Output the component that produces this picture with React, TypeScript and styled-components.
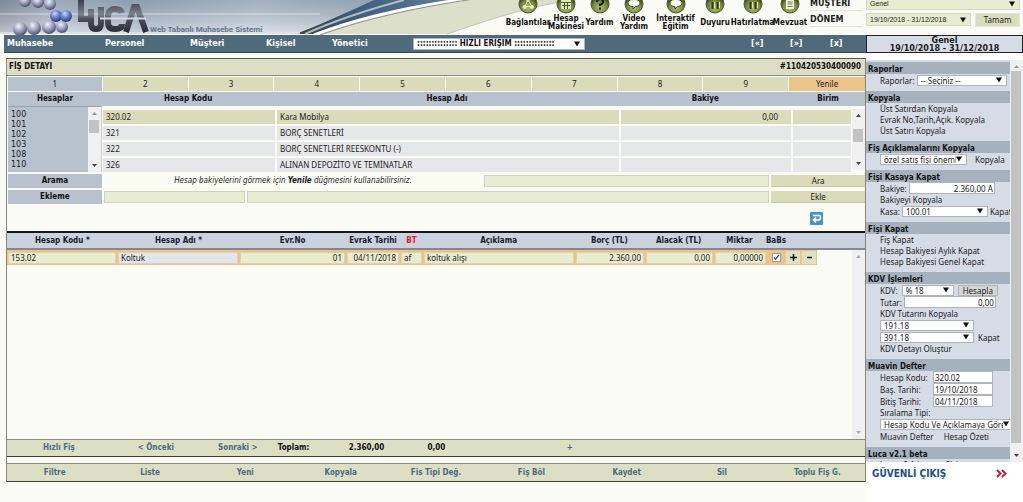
import React from "react";
import styled, { createGlobalStyle, css } from "styled-components";

const narrow = `"DejaVu Sans Condensed", "DejaVu Sans", sans-serif`;
const wide = `"DejaVu Sans", sans-serif`;
const human = `"Noto Sans", sans-serif`;
const plain = `"Liberation Sans", sans-serif`;

const c = {
  page: "#fbfbf5",
  nav: "#4f6b7b",
  olive: "#dcdfc4",
  tab: "#d9dbb9",
  slate: "#b8c2ce",
  slateLight: "#cad2de",
  field: "#e9edd0",
  fieldCool: "#e2e5ea",
  orange: "#ecc388",
  side: "#d5dce6",
  sideHead: "#a6b1be",
  link: "#4b6b85",
};

const Global = createGlobalStyle`
  *, *::before, *::after { box-sizing: border-box; }
  html, body { margin: 0; padding: 0; overflow: hidden; background: ${c.page}; }
  body { font: 8px/12px ${human}; color: #1c1c1c; }
  button, input, select { font: inherit; color: inherit; margin: 0; border-radius: 0; }
  button { cursor: pointer; padding: 0; border: 0; background: none; }
  a { color: inherit; text-decoration: none; }
  table { border-spacing: 0; }
  th, td { padding: 0; }
`;

const Page = styled.div`
  display: flex;
  flex-direction: column;
  height: 100vh;
  min-width: 960px;
`;

/* ---------- top banner ---------- */

const Header = styled.header`
  position: relative;
  flex: none;
  height: 35px;
  overflow: hidden;
  display: flex;
  justify-content: flex-end;
  align-items: flex-end;
`;

const BannerArt = styled.svg`
  position: absolute;
  left: 0;
  top: 0;
`;

const Tools = styled.nav`
  position: relative;
  display: grid;
  grid-template-columns: 42px 34px 33px 36px 47px 32px 43px 32px;
  margin-right: 4px;
`;

const Tool = styled.a`
  display: flex;
  flex-direction: column;
  align-items: center;
  height: 41px;
  font: bold 8px/8px ${narrow};
  white-space: nowrap;
  color: #111;
`;

const ToolLabel = styled.span`
  flex: 1;
  display: flex;
  align-items: center;
  text-align: center;
  white-space: pre;
  padding-bottom: 4px;
`;

const PeriodForm = styled.form`
  position: relative;
  display: grid;
  grid-template-columns: 52px 105px 45px;
  column-gap: 4px;
  row-gap: 2px;
  padding: 0 3px 8px 0;
  select { font: 7px/10px ${plain}; }
`;

const PeriodLabel = styled.label`
  font: bold 8px/14px ${wide};
  height: 14px;
  border-bottom: 1px solid #e2e2da;
  color: #222;
`;

const PillButton = styled.button`
  height: 14px;
  background: #d9dcc0;
  border: 1px solid #e6e8d6;
  text-align: center;
`;

/* ---------- shared form parts ---------- */

const SelectWrap = styled.span<{ $w?: string; $bg?: string; $h?: number; $span?: boolean }>`
  position: relative;
  display: inline-flex;
  width: ${(p) => p.$w ?? "100%"};
  height: ${(p) => p.$h ?? 11}px;
  flex: none;
  background: ${(p) => p.$bg ?? "#fff"};
  border: 1px solid ${(p) => (p.$bg ? "#d5d8c0" : "#aeb4bc")};
  ${(p) => p.$span && css`grid-column: span 2;`}
  select {
    appearance: none;
    border: 0;
    outline: 0;
    background: transparent;
    width: 100%;
    height: 100%;
    padding: 0 10px 0 3px;
    line-height: 10px;
    overflow: hidden;
    white-space: nowrap;
  }
  svg {
    position: absolute;
    right: 4px;
    top: calc(50% - 3px);
    pointer-events: none;
  }
`;

type PickProps = {
  label?: string;
  id?: string;
  value: string;
  w?: string;
  bg?: string;
  h?: number;
  span?: boolean;
};

function Pick({ label, id, value, w, bg, h, span }: PickProps) {
  return (
    <SelectWrap $w={w} $bg={bg} $h={h} $span={span}>
      <select id={id} aria-label={label}>
        <option>{value}</option>
      </select>
      <svg width="6" height="6" viewBox="0 0 6 6">
        <path d="M0 .5h6L3 5.500z" fill="#111" />
      </svg>
    </SelectWrap>
  );
}

const Bar = styled.div`
  position: relative;
  width: 13px;
  flex: none;
  background: #f0f0f0;
  display: flex;
  flex-direction: column;
  align-items: center;
  justify-content: space-between;
  padding: 4px 0;
`;

const Thumb = styled.div<{ $top: number; $height: string }>`
  position: absolute;
  top: ${(p) => p.$top}px;
  left: 1px;
  right: 2px;
  height: ${(p) => p.$height};
  background: #c2c2c2;
`;

function ScrollBar({ top, height, up = "#999", down = "#444" }: { top?: number; height?: string; up?: string; down?: string }) {
  return (
    <Bar aria-hidden="true">
      <svg width="5" height="5" viewBox="0 0 5 5">
        <path d="M0 4h5L2.500 1z" fill={up} />
      </svg>
      {top !== undefined && <Thumb $top={top} $height={height ?? "20px"} />}
      <svg width="5" height="5" viewBox="0 0 5 5">
        <path d="M0 1h5L2.500 4z" fill={down} />
      </svg>
    </Bar>
  );
}

/* ---------- navigation ---------- */

const Body = styled.div`
  flex: 1;
  min-height: 0;
  display: grid;
  grid-template-columns: minmax(0, 1fr) 157px;
`;

const Main = styled.main`
  display: flex;
  flex-direction: column;
  min-height: 0;
  padding-bottom: 20px;
`;

const NavBar = styled.nav`
  flex: none;
  height: 18px;
  margin-left: 4px;
  padding: 0 21px 0 3px;
  background: ${c.nav};
  border-bottom: 1px solid #35495a;
  color: #fff;
  font: bold 8px/18px ${wide};
  display: grid;
  grid-template-columns: 98px 85px 76px 66px 81px 172px 1fr 39px 40px 15px;
  align-items: center;
`;

const QuickPick = styled.div`
  display: flex;
  color: #111;
  font-family: ${narrow};
`;

/* ---------- receipt panel ---------- */

const Panel = styled.section`
  flex: 1;
  min-height: 0;
  margin: 5px 0 0 6px;
  border: 1px solid #85887a;
  border-top-color: #55584a;
  border-bottom: 0;
  display: flex;
  flex-direction: column;
`;

const Title = styled.header`
  flex: none;
  height: 17px;
  padding: 0 4px 0 2px;
  display: flex;
  justify-content: space-between;
  background: ${c.olive};
  border-bottom: 1px solid #8b8d83;
  font: bold 8px/16px ${narrow};
  color: #111;
  h1 { margin: 0; font: inherit; }
`;

const Tabs = styled.div`
  flex: none;
  display: grid;
  grid-template-columns: 94fr repeat(8, 85fr) 76fr;
  gap: 1px;
  padding: 1px 0 1px 1px;
`;

const Tab = styled.button<{ $tone: string }>`
  height: 14px;
  background: ${(p) => p.$tone};
`;

const Lookup = styled.div`
  flex: none;
  display: grid;
  grid-template-columns: 94px minmax(0, 1fr);
  padding-left: 1px;
`;

const headCell = css`
  font: bold 8px/14px ${narrow};
  text-align: center;
  height: 14px;
  color: #111;
`;

const GroupHead = styled.label`
  ${headCell}
  display: block;
  background: ${c.slate};
`;

const GroupList = styled.div`
  display: flex;
  height: 66px;
  border-top: 1px solid #99a3ad;
  border-right: 1px solid #c9ccd0;
  background: ${c.slate};
  select {
    appearance: none;
    flex: 1;
    border: 0;
    outline: 0;
    overflow: hidden;
    background: transparent;
    padding: 3px 0 0;
    font: 8px/10px ${wide};
  }
  option { padding: 0 0 0 3px; min-height: 0; height: 10px; line-height: 10px; }
`;

const AccountsBox = styled.div`
  position: relative;
  height: 80px;
  overflow: hidden;
`;

const AccountsTable = styled.table`
  display: block;
  thead, tbody { display: block; }
  thead { background: ${c.slate}; margin-bottom: 4px; }
`;

const AccountsHead = styled.tr`
  display: grid;
  grid-template-columns: 172fr 345fr 171fr 74fr;
  th { ${headCell} }
`;

const AccountsRow = styled.tr<{ $on?: boolean }>`
  display: grid;
  grid-template-columns: 172fr 342fr 170fr 58fr;
  column-gap: 2px;
  margin: 0 14px 2px 1px;
  td {
    height: 14px;
    line-height: 14px;
    padding-left: 3px;
    background: ${(p) => (p.$on ? c.tab : "#e6e7e9")};
  }
  td:nth-child(3) { text-align: right; padding-right: 13px; }
`;

const AccountsBar = styled.div`
  position: absolute;
  right: 0;
  top: 17px;
  bottom: 2px;
  display: flex;
`;

const Search = styled.form`
  flex: none;
  display: grid;
  grid-template-columns: 94fr 380fr 286fr 94fr;
  column-gap: 2px;
  height: 14px;
  margin: 2px 0 0 1px;
  align-items: center;
`;

const Adding = styled(Search)`
  grid-template-columns: 94fr 142fr 524fr 94fr;
`;

const RowLabel = styled.label`
  ${headCell}
  background: ${c.slate};
`;

const Hint = styled.p`
  margin: 0;
  text-align: center;
  font: italic 8px/14px ${narrow};
`;

const Field = styled.input<{ $bg?: string }>`
  width: 100%;
  min-width: 0;
  height: 12px;
  padding: 0 3px;
  border: 1px solid #cfd2c0;
  background: ${(p) => p.$bg ?? c.field};
  outline: 0;
`;

const OliveButton = styled.button`
  height: 12px;
  line-height: 12px;
  background: ${c.tab};
  border-bottom: 1px solid #c5c8a8;
`;

const BackRow = styled.div`
  flex: none;
  height: 27px;
  padding: 8px 42px 0 0;
  display: flex;
  justify-content: flex-end;
  button { height: 13px; }
`;

/* ---------- entry lines ---------- */

const lineColumns = "111fr 122fr 107fr 54fr 23fr 152fr 70fr 69fr 53fr 18fr 31px 48px";

const Lines = styled.div`
  position: relative;
  flex: 1;
  min-height: 0;
  display: flex;
  flex-direction: column;
  border-top: 2px solid #16181c;
`;

const LinesTable = styled.table`
  display: block;
  thead, tbody { display: block; }
`;

const LinesHead = styled.tr`
  display: grid;
  grid-template-columns: ${lineColumns};
  height: 17px;
  background: ${c.slateLight};
  border-bottom: 2px solid #85878a;
  th { font: bold 8px/15px ${narrow}; white-space: nowrap; color: #16202c; }
  th:nth-child(4), th:nth-child(10) { display: flex; justify-content: center; }
  th:nth-child(5) { color: #e02030; }
`;

const LinesRow = styled.tr`
  display: grid;
  grid-template-columns: ${lineColumns};
  height: 15px;
  background: linear-gradient(${c.orange}, ${c.orange}) no-repeat 0 0 / calc(100% - 48px) 100%;
  td { display: flex; align-items: center; padding-right: 2px; }
  td:nth-child(1) { padding-left: 1px; }
  td:nth-child(10) { justify-content: center; }
  td:nth-child(11) { gap: 2px; padding: 0; }
`;

const LineField = styled(Field)<{ $end?: boolean }>`
  padding: 0 2px;
  border-color: #d9d3b0;
  text-align: ${(p) => (p.$end ? "right" : "left")};
`;

const Check = styled.input`
  appearance: none;
  width: 9px;
  height: 9px;
  border: 1px solid #9a9a9a;
  background: #fff url("data:image/svg+xml,%3Csvg xmlns='http://www.w3.org/2000/svg' viewBox='0 0 8 8'%3E%3Cpath d='M1 4l2 2 4-5' fill='none' stroke='%23234a80' stroke-width='1.500'/%3E%3C/svg%3E") center / 7px 7px;
`;

const StepButton = styled.button`
  width: 14px;
  height: 13px;
  background: #dfe1c6;
  display: flex;
  align-items: center;
  justify-content: center;
`;

const LinesBar = styled.div`
  position: absolute;
  right: 0;
  top: 17px;
  bottom: 0;
  display: flex;
`;

const footBar = css`
  flex: none;
  display: grid;
  align-items: center;
  background: ${c.olive};
  border-top: 1px solid #8b8d83;
  border-bottom: 1px solid #3c3e38;
  font-weight: bold;
  text-align: center;
  color: ${c.link};
`;

const Totals = styled.div`
  ${footBar}
  height: 18px;
  grid-template-columns: 104fr 90fr 74fr 38fr 108fr 32fr 235fr 178fr;
  white-space: nowrap;
`;

const Sum = styled.output`
  color: #111;
  font: bold 8px/16px ${narrow};
  text-align: center;
`;

const Actions = styled.div`
  ${footBar}
  height: 19px;
  margin: 6px 0 0;
  grid-template-columns: repeat(9, 1fr);
`;

const TextButton = styled.button`
  font: bold 8px/14px ${narrow};
`;

/* ---------- side column ---------- */

const Side = styled.aside`
  display: flex;
  flex-direction: column;
  min-height: 0;
  background: #fff;
`;

const Company = styled.div`
  flex: none;
  height: 18px;
  padding-top: 1px;
  border: 1px solid #222;
  background: ${c.side};
  text-align: center;
  font: bold 8px/8px ${wide};
`;

const SideScroll = styled.div`
  flex: 1;
  min-height: 0;
  display: flex;
  margin-top: 7px;
`;

const SideBody = styled.div`
  flex: 1;
  min-width: 0;
  overflow: hidden;
  background: ${c.side};
  padding-top: 2px;
`;

const Group = styled.section`
  padding-bottom: 5px;
  h2 {
    margin: 0;
    padding: 4px 0 0 2px;
    height: 12px;
    background: ${c.sideHead};
    font: bold 8px/8px ${narrow};
    color: #111;
    white-space: nowrap;
  }
`;

const Item = styled.a`
  display: block;
  height: 11px;
  line-height: 11px;
  padding-left: 14px;
  white-space: nowrap;
`;

const FormRow = styled.div<{ $gap?: number }>`
  display: flex;
  align-items: center;
  height: 12px;
  gap: ${(p) => p.$gap ?? 2}px;
  padding-left: 14px;
  line-height: 11px;
  white-space: nowrap;
`;

const FixedLabel = styled.label`
  width: 51px;
  flex: none;
`;

const SideField = styled.input<{ $w: number; $end?: boolean }>`
  width: ${(p) => p.$w}px;
  flex: none;
  height: 12px;
  padding: 0 1px;
  border: 1px solid #aeb4bc;
  background: #fff;
  text-align: ${(p) => (p.$end ? "right" : "left")};
`;

const SmallButton = styled.button`
  height: 11px;
  padding: 0 4px;
  line-height: 9px;
  background: #d6d6d6;
  border: 1px solid #b4b4b4;
`;

const Exit = styled.a`
  flex: none;
  height: 40px;
  padding: 6px 16px 0 6px;
  display: flex;
  justify-content: space-between;
  font: bold 10px/12px ${narrow};
  color: #1b4f8a;
`;

/* ---------- drawings ---------- */

function Banner() {
  const pearls = [
    [25, 1, 6], [38, 2, 6], [50, 4, 6],
    [20, 29, 7], [34, 28, 7], [49, 27, 7], [62, 27, 6],
  ];
  return (
    <BannerArt width="580" height="35" viewBox="0 0 580 35" aria-hidden="true">
      <defs>
        <linearGradient id="sky" x1="0" x2="1" y1="0" y2="0">
          <stop offset="0" stopColor="#8b93a0" />
          <stop offset=".12" stopColor="#b9c1cc" />
          <stop offset=".3" stopColor="#a2b1c2" />
          <stop offset=".55" stopColor="#c2ccd7" />
          <stop offset=".8" stopColor="#a9b7c4" />
          <stop offset="1" stopColor="#7f95a8" />
        </linearGradient>
        <linearGradient id="haze" x1="0" x2="0" y1="0" y2="1">
          <stop offset="0" stopColor="#5b7085" stopOpacity=".3" />
          <stop offset="1" stopColor="#fff" stopOpacity=".45" />
        </linearGradient>
        <linearGradient id="edge" x1="0" x2="1" y1="0" y2="0">
          <stop offset="0" stopColor="#3c3f3f" />
          <stop offset=".4" stopColor="#3d5f7c" />
          <stop offset="1" stopColor="#5d7d98" />
        </linearGradient>
        <radialGradient id="pearl" cx=".4" cy=".3" r=".7">
          <stop offset="0" stopColor="#f1f2fa" />
          <stop offset=".5" stopColor="#a3a7c4" />
          <stop offset="1" stopColor="#4c5070" />
        </radialGradient>
        <radialGradient id="blue" cx=".4" cy=".3" r=".7">
          <stop offset="0" stopColor="#cdd9fb" />
          <stop offset=".5" stopColor="#6680c8" />
          <stop offset="1" stopColor="#2a3a78" />
        </radialGradient>
        <linearGradient id="metal" gradientUnits="userSpaceOnUse" x1="0" x2="0" y1="0" y2="32">
          <stop offset="0" stopColor="#3a3f49" />
          <stop offset=".45" stopColor="#7d828d" />
          <stop offset=".6" stopColor="#4a4f5a" />
          <stop offset="1" stopColor="#2a2d36" />
        </linearGradient>
      </defs>
      <path d="M0 0H572C530 6 488 20 447 34H0z" fill="#dcdfca" />
      <path d="M0 0H466C400 8 352 22 318 34H0z" fill="url(#sky)" />
      <path d="M0 0H466C400 8 352 22 318 34H0z" fill="url(#haze)" />
      <path d="M296 34C322 24 352 10 374 0H448C396 8 350 22 314 34z" fill="url(#edge)" />
      <path d="M305 34C336 20 374 8 404 0" fill="none" stroke="#b4bcc2" strokeWidth="2" />
      <path d="M314 35C350 21 400 8 466 -1" fill="none" stroke="#fff" strokeWidth="3" />
      <path d="M320 35C356 22 406 9 474 -1" fill="none" stroke="#8c9088" strokeWidth="1" />
      <path d="M447 34C488 20 530 6 572 0" fill="none" stroke="#c3c7b4" strokeWidth="1" />
      <path d="M0 14H320" stroke="#e9edf2" strokeWidth="1" opacity=".7" />
      <path d="M0 33H300" stroke="#dfe4ea" strokeWidth="2" opacity=".8" />
      {pearls.map(([x, y, r]) => (
        <circle key={`${x}-${y}`} cx={x} cy={y} r={r} fill="url(#pearl)" />
      ))}
      <circle cx="56" cy="16" r="6" fill="url(#blue)" />
      <circle cx="66" cy="16" r="6" fill="url(#blue)" />
      <g stroke="url(#metal)" fill="none" strokeWidth="6">
        <path d="M81 -2V19H90" />
        <path d="M91 9V23Q91 29 96 29T101 23V7" />
        <path d="M122 13Q121 9 115 9T108 15V23Q108 29 115 29T122 24" />
        <path d="M126 32L134 7H137L146 32" />
      </g>
      <path d="M100 18.500H146" stroke="#d5d9df" strokeWidth="2" />
      <text x="150" y="32" fill="#61758a" fontFamily="Roboto, sans-serif" fontWeight="bold" fontSize="8">
        Web Tabanlı Muhasebe Sistemi
      </text>
    </BannerArt>
  );
}

const glyphs: Record<string, React.ReactNode> = {
  links: (
    <g fill="#e6ebc6" stroke="#e6ebc6">
      <path d="M10 6L7 12.500M7 12.500H14M10 6L14 12.500" fill="none" strokeWidth="1" />
      <circle cx="10" cy="5.500" r="1.500" />
      <circle cx="6.500" cy="13" r="1.500" />
      <circle cx="14" cy="13" r="1.500" />
    </g>
  ),
  calc: (
    <g>
      <rect x="5" y="5" width="10" height="10" fill="#dfe6b4" />
      <path d="M5 8.500H15M6 11.500H14M8.500 8V15M11.500 8V15" stroke="#4c5c20" />
    </g>
  ),
  help: (
    <g fill="none" stroke="#15180a" strokeWidth="2">
      <path d="M7 8Q7 5 10 5T13 8Q13 10 10 10.500V12" />
      <path d="M10 13.500V15.500" />
    </g>
  ),
  chat: (
    <path d="M10 5.500C14 5.500 16 7 16 9S14 12.500 11.500 12.500L9 15V12.500C6 12.500 4 11.500 4 9S6 5.500 10 5.500z" fill="#fff" stroke="#39451a" />
  ),
  info: (
    <g fill="none" stroke="#2c3810" strokeWidth="2">
      <path d="M7.500 8V15M12.500 8V15M7.500 4V6M12.500 4V6" />
      <path d="M9.500 8V14M14.500 8V14" stroke="#dfe6b4" strokeWidth="1" />
    </g>
  ),
  page: (
    <g>
      <path d="M6 4H12L14 6V15H6z" fill="#f1f4e2" />
      <path d="M7.500 8H12.500M7.500 10H12.500M7.500 12.500H12.500" stroke="#6d7b45" />
    </g>
  ),
};

function Orb({ kind }: { kind: string }) {
  return (
    <svg width="20" height="20" viewBox="0 0 20 20" aria-hidden="true">
      <defs>
        <radialGradient id={`orb-${kind}`} cx=".5" cy=".7" r=".6">
          <stop offset="0" stopColor="#b3c26c" />
          <stop offset=".65" stopColor="#75883a" />
          <stop offset="1" stopColor="#37441a" />
        </radialGradient>
      </defs>
      <circle cx="10" cy="10" r="9" fill={`url(#orb-${kind})`} stroke="#4d5347" />
      {glyphs[kind]}
    </svg>
  );
}

/* ---------- data ---------- */

const tools = [
  ["links", "Bağlantılar"],
  ["calc", "Hesap\nMakinesi"],
  ["help", "Yardım"],
  ["chat", "Video\nYardım"],
  ["chat", "İnteraktif\nEğitim"],
  ["info", "Duyuru"],
  ["info", "Hatırlatma"],
  ["page", "Mevzuat"],
];

const accounts = [
  ["320.02", "Kara Mobilya", "0,00"],
  ["321", "BORÇ SENETLERİ", ""],
  ["322", "BORÇ SENETLERİ REESKONTU (-)", ""],
  ["326", "ALINAN DEPOZİTO VE TEMİNATLAR", ""],
];

const lineHeads = ["Hesap Kodu *", "Hesap Adı *", "Evr.No", "Evrak Tarihi", "BT", "Açıklama", "Borç (TL)", "Alacak (TL)", "Miktar", "BaBs", "", ""];

const lineFields: { name: string; value: string; end?: boolean; bg?: string }[] = [
  { name: "Hesap Kodu", value: "153.02" },
  { name: "Hesap Adı", value: "Koltuk", bg: c.fieldCool },
  { name: "Evr.No", value: "01", end: true },
  { name: "Evrak Tarihi", value: "04/11/2018", end: true },
  { name: "BT", value: "af" },
  { name: "Açıklama", value: "koltuk alışı" },
  { name: "Borç (TL)", value: "2.360,00", end: true },
  { name: "Alacak (TL)", value: "0,00", end: true },
  { name: "Miktar", value: "0,00000", end: true },
];

const actions = ["Filtre", "Liste", "Yeni", "Kopyala", "Fis Tipi Değ.", "Fiş Böl", "Kaydet", "Sil", "Toplu Fiş G."];

/* ---------- page ---------- */

function SideColumn() {
  return (
    <Side>
      <Company>
        Genel
        <br />
        19/10/2018 - 31/12/2018
      </Company>
      <SideScroll>
        <SideBody>
          <Group>
            <h2>Raporlar</h2>
            <FormRow>
              <label htmlFor="reports">Raporlar:</label>
              <Pick id="reports" value="-- Seçiniz --" w="90px" />
            </FormRow>
          </Group>
          <Group>
            <h2>Kopyala</h2>
            <Item href="#">Üst Satırdan Kopyala</Item>
            <Item href="#">Evrak No,Tarih,Açık. Kopyala</Item>
            <Item href="#">Üst Satırı Kopyala</Item>
          </Group>
          <Group>
            <h2>Fiş Açıklamalarını Kopyala</h2>
            <FormRow $gap={8}>
              <Pick label="Fiş açıklaması" value="özel satış fişi önemli" w="87px" />
              <a href="#">Kopyala</a>
            </FormRow>
          </Group>
          <Group>
            <h2>Fişi Kasaya Kapat</h2>
            <FormRow>
              <label htmlFor="balance">Bakiye:</label>
              <SideField id="balance" defaultValue="2.360,00 A" $w={86} $end />
            </FormRow>
            <Item href="#">Bakiyeyi Kopyala</Item>
            <FormRow>
              <label htmlFor="cash">Kasa:</label>
              <Pick id="cash" value="100.01" w="86px" />
              <a href="#">Kapat</a>
            </FormRow>
          </Group>
          <Group>
            <h2>Fişi Kapat</h2>
            <Item href="#">Fiş Kapat</Item>
            <Item href="#">Hesap Bakiyesi Aylık Kapat</Item>
            <Item href="#">Hesap Bakiyesi Genel Kapat</Item>
          </Group>
          <Group>
            <h2>KDV İşlemleri</h2>
            <FormRow $gap={4}>
              <label htmlFor="vat">KDV:</label>
              <Pick id="vat" value="% 18" w="52px" />
              <SmallButton type="button">Hesapla</SmallButton>
            </FormRow>
            <FormRow>
              <label htmlFor="amount">Tutar:</label>
              <SideField id="amount" defaultValue="0,00" $w={92} $end />
            </FormRow>
            <Item href="#">KDV Tutarını Kopyala</Item>
            <FormRow>
              <Pick label="İndirilecek KDV" value="191.18" w="94px" />
            </FormRow>
            <FormRow $gap={4}>
              <Pick label="Hesaplanan KDV" value="391.18" w="94px" />
              <a href="#">Kapat</a>
            </FormRow>
            <Item href="#">KDV Detayı Oluştur</Item>
          </Group>
          <Group>
            <h2>Muavin Defter</h2>
            <FormRow>
              <FixedLabel htmlFor="code">Hesap Kodu:</FixedLabel>
              <SideField id="code" defaultValue="320.02" $w={60} />
            </FormRow>
            <FormRow>
              <FixedLabel htmlFor="from">Baş. Tarihi:</FixedLabel>
              <SideField id="from" defaultValue="19/10/2018" $w={60} />
            </FormRow>
            <FormRow>
              <FixedLabel htmlFor="to">Bitiş Tarihi:</FixedLabel>
              <SideField id="to" defaultValue="04/11/2018" $w={60} />
            </FormRow>
            <Item as="label" htmlFor="order">Sıralama Tipi:</Item>
            <FormRow>
              <Pick id="order" value="Hesap Kodu Ve Açıklamaya Göre" w="134px" />
            </FormRow>
            <FormRow $gap={10}>
              <a href="#">Muavin Defter</a>
              <a href="#">Hesap Özeti</a>
            </FormRow>
          </Group>
          <Group>
            <h2>Luca v2.1 beta</h2>
            <Item href="#">Luca v2.1 betaya Giriş</Item>
          </Group>
        </SideBody>
        <ScrollBar top={11} height="calc(100% - 30px)" />
      </SideScroll>
      <Exit href="#">
        GÜVENLİ ÇIKIŞ
        <svg width="11" height="11" viewBox="0 0 11 11" aria-hidden="true">
          <path d="M1 2l3.500 3.500L1 9M6 2l3.500 3.500L6 9" fill="none" stroke="#c8202c" strokeWidth="2" />
        </svg>
      </Exit>
    </Side>
  );
}

export default function App() {
  return (
    <Page>
      <Global />
      <Header>
        <Banner />
        <Tools>
          {tools.map(([kind, label]) => (
            <Tool href="#" key={label}>
              <Orb kind={kind} />
              <ToolLabel>{label}</ToolLabel>
            </Tool>
          ))}
        </Tools>
        <PeriodForm>
          <PeriodLabel htmlFor="client">MÜŞTERİ</PeriodLabel>
          <Pick id="client" value="Genel" bg="#e9edd0" h={13} span />
          <PeriodLabel htmlFor="period">DÖNEM</PeriodLabel>
          <Pick id="period" value="19/10/2018 - 31/12/2018" bg="#e9edd0" h={13} />
          <PillButton type="button">Tamam</PillButton>
        </PeriodForm>
      </Header>

      <Body>
        <Main>
          <NavBar>
            <a href="#">Muhasebe</a>
            <a href="#">Personel</a>
            <a href="#">Müşteri</a>
            <a href="#">Kişisel</a>
            <a href="#">Yönetici</a>
            <QuickPick>
              <Pick label="Hızlı erişim" value=":::::::::::::: HIZLI ERİŞİM ::::::::::::::" h={12} />
            </QuickPick>
            <span />
            <a href="#">[«]</a>
            <a href="#">[»]</a>
            <a href="#">[x]</a>
          </NavBar>

          <Panel>
            <Title>
              <h1>FİŞ DETAYI</h1>
              <span>#110420530400090</span>
            </Title>
            <Tabs>
              {["1", "2", "3", "4", "5", "6", "7", "8", "9", "Yenile"].map((t, i) => (
                <Tab key={t} type="button" $tone={i === 0 ? c.slate : i === 9 ? c.orange : c.tab}>
                  {t}
                </Tab>
              ))}
            </Tabs>

            <Lookup>
              <div>
                <GroupHead htmlFor="groups">Hesaplar</GroupHead>
                <GroupList>
                  <select id="groups" size={6}>
                    {["100", "101", "102", "103", "108", "110"].map((g) => (
                      <option key={g}>{g}</option>
                    ))}
                  </select>
                  <ScrollBar top={13} height="13px" />
                </GroupList>
              </div>
              <AccountsBox>
                <AccountsTable>
                  <thead>
                    <AccountsHead>
                      <th>Hesap Kodu</th>
                      <th>Hesap Adı</th>
                      <th>Bakiye</th>
                      <th>Birim</th>
                    </AccountsHead>
                  </thead>
                  <tbody>
                    {accounts.map(([code, name, sum], i) => (
                      <AccountsRow key={code} $on={i === 0}>
                        <td>{code}</td>
                        <td>{name}</td>
                        <td>{sum}</td>
                        <td />
                      </AccountsRow>
                    ))}
                  </tbody>
                </AccountsTable>
                <AccountsBar>
                  <ScrollBar top={20} height="13px" up="#444" />
                </AccountsBar>
              </AccountsBox>
            </Lookup>

            <Search>
              <RowLabel htmlFor="search">Arama</RowLabel>
              <Hint>
                Hesap bakiyelerini görmek için <b>Yenile</b> düğmesini kullanabilirsiniz.
              </Hint>
              <Field id="search" />
              <OliveButton type="button">Ara</OliveButton>
            </Search>
            <Adding>
              <RowLabel htmlFor="add-code">Ekleme</RowLabel>
              <Field id="add-code" />
              <Field aria-label="Hesap adı" />
              <OliveButton type="button">Ekle</OliveButton>
            </Adding>
            <BackRow>
              <button type="button" aria-label="Geri">
                <svg width="13" height="13" viewBox="0 0 13 13">
                  <rect width="13" height="13" rx="1" fill="#4a94c4" />
                  <path d="M3 3.500H9Q10.500 3.500 10.500 5.500T9 8H4M6 5.500L3.500 8L6 10.500" fill="none" stroke="#fff" strokeWidth="1.500" />
                </svg>
              </button>
            </BackRow>

            <Lines>
              <LinesTable>
                <thead>
                  <LinesHead>
                    {lineHeads.map((h, i) => (
                      <th key={i}>{h}</th>
                    ))}
                  </LinesHead>
                </thead>
                <tbody>
                  <LinesRow>
                    {lineFields.map((f) => (
                      <td key={f.name}>
                        <LineField aria-label={f.name} defaultValue={f.value} $end={f.end} $bg={f.bg} />
                      </td>
                    ))}
                    <td>
                      <Check type="checkbox" aria-label="BaBs" defaultChecked />
                    </td>
                    <td>
                      <StepButton type="button" aria-label="Satır ekle">
                        <svg width="7" height="7" viewBox="0 0 7 7">
                          <path d="M0 3.500H7M3.500 0V7" stroke="#111" strokeWidth="1.500" />
                        </svg>
                      </StepButton>
                      <StepButton type="button" aria-label="Satır sil">
                        <svg width="7" height="7" viewBox="0 0 7 7">
                          <path d="M1 3.500H6" stroke="#111" strokeWidth="1.500" />
                        </svg>
                      </StepButton>
                    </td>
                  </LinesRow>
                </tbody>
              </LinesTable>
              <LinesBar>
                <ScrollBar up="#aaa" down="#aaa" />
              </LinesBar>
            </Lines>

            <Totals>
              <TextButton type="button">Hızlı Fiş</TextButton>
              <TextButton type="button">&lt; Önceki</TextButton>
              <TextButton type="button">Sonraki &gt;</TextButton>
              <Sum>Toplam:</Sum>
              <Sum>2.360,00</Sum>
              <Sum>0,00</Sum>
              <TextButton type="button">+</TextButton>
            </Totals>
            <Actions>
              {actions.map((a) => (
                <TextButton type="button" key={a}>
                  {a}
                </TextButton>
              ))}
            </Actions>
          </Panel>
        </Main>
        <SideColumn />
      </Body>
    </Page>
  );
}
